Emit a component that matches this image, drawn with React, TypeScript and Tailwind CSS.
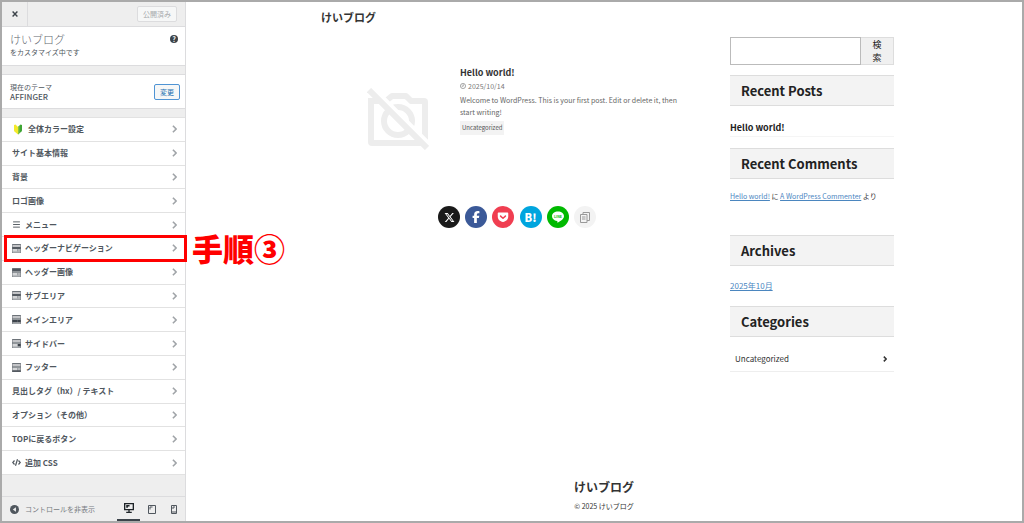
import type { ReactNode } from "react";
import { Menu } from "lucide-react";
import { FaFacebookF, FaGetPocket, FaXTwitter } from "react-icons/fa6";

type PanelArea = "nav" | "image" | "sub" | "main" | "side" | "footer";

interface PanelItem {
  label: string;
  icon?: ReactNode;
  highlighted?: boolean;
}

function BeginnerMark() {
  return (
    <svg viewBox="0 0 16 20" className="mx-[2px] h-[11px] w-[8px]">
      <path d="M0 1 L3 0 L8 5 V20 L1 14 Q0 13 0 11Z" fill="#f4ea2a" />
      <path d="M16 1 L13 0 L8 5 V20 L15 14 Q16 13 16 11Z" fill="#3fa535" />
      <path d="M13 0 L8 5 V20 L11 17 V2Z" fill="#8cc63f" />
    </svg>
  );
}

function AreaIcon({ area }: { area: PanelArea }) {
  return (
    <svg viewBox="0 0 18 18" className="h-[9px] w-[9px]">
      <rect x="0" y="0" width="18" height="18" rx="1" fill="#6c7278" />
      <rect x="1" y="2" width="16" height="4" fill={area === "image" ? "#50575e" : "#c3c4c7"} />
      <rect x="1" y="7" width="16" height="2" fill={area === "sub" || area === "nav" ? "#3c434a" : "#b4b7ba"} />
      <rect x="1" y="10" width="10" height="5" fill={area === "main" ? "#3c434a" : "#d4d5d7"} />
      <rect x="12" y="10" width="5" height="5" fill={area === "side" || area === "main" ? "#3c434a" : "#b4b7ba"} />
      <rect x="1" y="15" width="16" height="2" fill={area === "footer" ? "#3c434a" : "#d4d5d7"} />
    </svg>
  );
}

function CodeIcon() {
  return (
    <svg viewBox="0 0 18 14" className="h-[7px] w-[9px]" fill="none" stroke="#50575e" strokeWidth="2.4">
      <path d="M5 3 L1.5 7 L5 11 M13 3 L16.5 7 L13 11 M11 0.5 L7 13.5" />
    </svg>
  );
}

function Chevron() {
  return (
    <svg viewBox="0 0 6 10" className="h-2 w-[5px] shrink-0" fill="none" stroke="#a0a4a8" strokeWidth="2">
      <path d="M1 1 L5 5 L1 9" />
    </svg>
  );
}

const panels: PanelItem[] = [
  { label: "全体カラー設定", icon: <BeginnerMark /> },
  { label: "サイト基本情報" },
  { label: "背景" },
  { label: "ロゴ画像" },
  { label: "メニュー", icon: <Menu className="h-[9px] w-[9px]" strokeWidth={2.5} /> },
  { label: "ヘッダーナビゲーション", icon: <AreaIcon area="nav" />, highlighted: true },
  { label: "ヘッダー画像", icon: <AreaIcon area="image" /> },
  { label: "サブエリア", icon: <AreaIcon area="sub" /> },
  { label: "メインエリア", icon: <AreaIcon area="main" /> },
  { label: "サイドバー", icon: <AreaIcon area="side" /> },
  { label: "フッター", icon: <AreaIcon area="footer" /> },
  { label: "見出しタグ（hx）/ テキスト" },
  { label: "オプション（その他）" },
  { label: "TOPに戻るボタン" },
  { label: "追加 CSS", icon: <CodeIcon /> },
];

function PanelRow({ item }: { item: PanelItem }) {
  return (
    <li className="relative flex flex-1 border-b border-[#e2e2e2] bg-white">
      <button className="flex min-w-0 flex-1 items-center pr-2 pl-[10px] text-left text-[8px] font-bold text-[#50575e]">
        {item.icon && <span className="mr-1 flex shrink-0">{item.icon}</span>}
        <span className="flex-1 whitespace-nowrap">{item.label}</span>
        <Chevron />
      </button>
      {item.highlighted && (
        <>
          <span className="pointer-events-none absolute -inset-x-[2px] -inset-y-[2px] left-[2px] z-10 border-[3px] border-[#ff0000]" />
          <span className="pointer-events-none absolute top-1/2 left-full z-10 ml-[7px] -translate-y-1/2 text-[31px] leading-8 font-black whitespace-nowrap text-[#ff0000]">
            手順③
          </span>
        </>
      )}
    </li>
  );
}

function Customizer() {
  return (
    <aside className="flex w-[184px] shrink-0 flex-col border-r border-[#dcdcde] bg-[#eeeeee]">
      <header className="flex h-[25px] items-center justify-between border-b border-[#dcdcde] pr-2">
        <button aria-label="閉じる" className="flex h-full w-[26px] items-center justify-center border-r border-[#dcdcde]">
          <svg viewBox="0 0 10 10" className="h-[6px] w-[6px]" stroke="#3c434a" strokeWidth="2.4">
            <path d="M1 1 L9 9 M9 1 L1 9" />
          </svg>
        </button>
        <button disabled className="h-4 w-10 rounded-[2px] border border-[#dcdcde] bg-[#f6f7f7] text-[7px] leading-3 text-[#a7aaad]">
          公開済み
        </button>
      </header>

      <section className="flex h-[39px] justify-between border-b border-[#dcdcde] bg-white pt-1 pr-[7px] pl-2">
        <div>
          <h1 className="text-[11px] leading-4 font-light text-[#646970]">けいブログ</h1>
          <p className="text-[7px] leading-[10px] text-[#50575e]">をカスタマイズ中です</p>
        </div>
        <button aria-label="ヘルプ" className="mt-1 flex h-2 w-2 items-center justify-center rounded-full bg-[#3c434a] text-[7px] leading-none font-bold text-white">
          ?
        </button>
      </section>

      <section className="mt-2 flex h-[35px] items-center justify-between border-y border-[#dcdcde] bg-white pr-[5px] pl-2">
        <p className="text-[7px] leading-[10px] text-[#50575e]">
          現在のテーマ
          <strong className="block text-[8px] font-medium">AFFINGER</strong>
        </p>
        <button className="h-4 w-[26px] rounded-[2px] border border-[#4f94d4] bg-[#f6f7f7] text-[7px] leading-3 text-[#2271b1]">
          変更
        </button>
      </section>

      <ul className="mt-2 flex flex-1 flex-col border-t border-[#e2e2e2]">
        {panels.map((item) => (
          <PanelRow key={item.label} item={item} />
        ))}
      </ul>

      <footer className="mt-[21px] flex h-[25px] items-center border-t border-[#dcdcde] pl-2">
        <button className="flex flex-1 items-center gap-[6px] text-[7px] whitespace-nowrap text-[#787c82]">
          <svg viewBox="0 0 16 16" className="h-[9px] w-[9px]">
            <circle cx="8" cy="8" r="8" fill="#50575e" />
            <path d="M10.5 4 V12 L5 8Z" fill="#eeeeee" />
          </svg>
          コントロールを非表示
        </button>
        <button aria-label="デスクトップ" className="flex h-full w-[23px] items-center justify-center border-b-2 border-[#3c434a]">
          <svg viewBox="0 0 18 18" className="h-[10px] w-[10px]" fill="none" stroke="#1d2327" strokeWidth="2.4">
            <path d="M1.2 1.2 H16.8 V11.8 H1.2Z M9 12 V17 M4 16.8 H14 M4 5 H10 M4 7.5 H7" />
          </svg>
        </button>
        <button aria-label="タブレット" className="flex h-full w-[23px] items-center justify-center">
          <svg viewBox="0 0 16 18" className="h-[9px] w-2" fill="none" stroke="#50575e" strokeWidth="2">
            <path d="M1 1 H15 V17 H1Z M4 9 V4 H9" />
          </svg>
        </button>
        <button aria-label="モバイル" className="flex h-full w-[22px] items-center justify-center">
          <svg viewBox="0 0 12 18" className="h-[9px] w-[6px]" fill="none" stroke="#50575e" strokeWidth="2">
            <path d="M1 1 H11 V17 H1Z M1 14 H11 M4 8 V4 H8" />
          </svg>
        </button>
      </footer>
    </aside>
  );
}

function NoImage() {
  return (
    <svg viewBox="0 0 62 62" className="mt-[21px] h-[62px] w-[62px]" fill="none" stroke="#ededed" strokeWidth="6">
      <path
        d="M4 10 V54 Q4 55 5 55 H57 Q58 55 58 54 V14 Q58 13 57 13 H44 L39 8 H25 L19 13 H5 Q4 13 4 14"
        strokeLinejoin="round"
      />
      <circle cx="31" cy="33" r="14" />
      <path d="M3 0 L62 59" stroke="#ffffff" strokeWidth="9" />
      <path d="M2 2 L60 60" />
    </svg>
  );
}

function ShareButtons() {
  return (
    <div className="mx-auto flex w-[158px] justify-between">
      <a href="#x" aria-label="X" className="flex h-[22px] w-[22px] items-center justify-center rounded-full bg-[#1a1a1a] text-white">
        <FaXTwitter className="h-[11px] w-[11px]" />
      </a>
      <a href="#facebook" aria-label="Facebook" className="flex h-[22px] w-[22px] items-center justify-center rounded-full bg-[#3b5998] text-white">
        <FaFacebookF className="h-3 w-3" />
      </a>
      <a href="#pocket" aria-label="Pocket" className="flex h-[22px] w-[22px] items-center justify-center rounded-full bg-[#f03e51] text-white">
        <FaGetPocket className="h-3 w-3" />
      </a>
      <a href="#hatena" aria-label="はてなブックマーク" className="flex h-[22px] w-[22px] items-center justify-center rounded-full bg-[#00a5de] text-[11px] leading-none font-black text-white">
        B!
      </a>
      <a href="#line" aria-label="LINE" className="flex h-[22px] w-[22px] items-center justify-center rounded-full bg-[#00b900]">
        <svg viewBox="0 0 24 24" className="h-3 w-3">
          <path d="M12 1 C5.5 1 0 5 0 10.5 C0 15.3 4.2 19.2 10 20 C11 20.2 11 21 10.7 23.5 C13 22.7 24 17 24 10.5 C24 5 18.5 1 12 1Z" fill="#ffffff" />
          <text x="12" y="13" textAnchor="middle" fontSize="7" fontWeight="700" fill="#00b900">LINE</text>
        </svg>
      </a>
      <button aria-label="コピー" className="flex h-[22px] w-[22px] items-center justify-center rounded-full bg-[#f3f3f3]">
        <svg viewBox="0 0 20 22" className="h-[11px] w-[10px]" fill="none" stroke="#999999" strokeWidth="2">
          <path d="M6 5 V1 H19 V17 H14 M1 5 H14 V21 H1Z M4 10 H11 M4 14 H11" />
        </svg>
      </button>
    </div>
  );
}

function Post() {
  return (
    <article className="flex">
      <div className="flex w-[139px] shrink-0 justify-end pr-[31px]">
        <NoImage />
      </div>
      <div className="flex-1">
        <h2 className="text-[9px] leading-3 font-bold text-[#333333]">Hello world!</h2>
        <p className="mt-px flex items-center gap-[2px] text-[7px] leading-3 text-[#777777]">
          <svg viewBox="0 0 14 14" className="h-[6px] w-[6px]" fill="none" stroke="currentColor" strokeWidth="1.5">
            <circle cx="7" cy="7" r="6" />
            <path d="M7.5 3 V7.5 H4" />
          </svg>
          2025/10/14
        </p>
        <p className="mt-[2px] text-[7px] leading-3 text-[#666666]">
          Welcome to WordPress. This is your first post. Edit or delete it, then start writing!
        </p>
        <a href="#uncategorized" className="mt-[3px] block w-fit bg-[#f3f3f3] px-[2px] text-[6px] leading-[14px] text-[#555555]">
          Uncategorized
        </a>
      </div>
    </article>
  );
}

function WidgetTitle({ children }: { children: ReactNode }) {
  return (
    <h3 className="border-y border-[#dddddd] bg-[#f3f3f3] px-[11px] text-[13px] leading-[29px] font-bold text-[#222222]">
      {children}
    </h3>
  );
}

function Widgets() {
  return (
    <aside className="w-[164px] shrink-0">
      <form className="flex h-7">
        <input aria-label="検索" className="w-[131px] shrink-0 border border-[#bbbbbb] bg-white px-2 text-[9px]" />
        <button type="button" className="min-w-0 flex-1 border border-l-0 border-[#dddddd] bg-[#f0f0f0] px-[10px] text-[9px] leading-[13px] text-[#222222]">
          検索
        </button>
      </form>

      <section className="mt-[10px] h-[73px]">
        <WidgetTitle>Recent Posts</WidgetTitle>
        <a href="#hello-world" className="mt-[14px] block border-b border-[#f5f5f5] text-[9px] leading-4 font-bold text-[#222222]">
          Hello world!
        </a>
      </section>

      <section className="h-[87px]">
        <WidgetTitle>Recent Comments</WidgetTitle>
        <p className="mt-[9px] text-[7px] leading-4 text-[#333333]">
          <a href="#hello-world" className="text-[#4b86bf] underline">Hello world!</a> に{" "}
          <a href="#commenter" className="text-[#4b86bf] underline">A WordPress Commenter</a> より
        </p>
      </section>

      <section className="h-[71px]">
        <WidgetTitle>Archives</WidgetTitle>
        <a href="#2025-10" className="mt-3 block text-[8px] leading-4 text-[#4b86bf] underline">2025年10月</a>
      </section>

      <section>
        <WidgetTitle>Categories</WidgetTitle>
        <a href="#uncategorized" className="mt-[10px] flex items-center justify-between border-b border-[#eeeeee] pr-[7px] pl-[5px] text-[8px] leading-6 text-[#333333]">
          Uncategorized
          <svg viewBox="0 0 6 10" className="h-[6px] w-[4px]" fill="none" stroke="currentColor" strokeWidth="2.5">
            <path d="M1 1 L5 5 L1 9" />
          </svg>
        </a>
      </section>
    </aside>
  );
}

export default function App() {
  return (
    <div className="flex min-h-screen border-2 border-[#aaaaaa] bg-white font-['Noto_Sans_CJK_JP',sans-serif]">
      <Customizer />
      <div className="flex min-w-0 flex-1 flex-col">
        <div className="flex-1 pl-[7px]">
          <div className="mx-auto max-w-[573px]">
            <header className="h-[35px] pt-[7px]">
              <a href="#home" className="block text-[11px] leading-4 font-bold text-[#333333]">けいブログ</a>
            </header>
            <div className="flex justify-between">
              <main className="w-[392px] pt-[30px]">
                <div className="pr-[30px]">
                  <Post />
                </div>
                <div className="pt-[56px]">
                  <ShareButtons />
                </div>
              </main>
              <Widgets />
            </div>
          </div>
        </div>
        <footer className="pb-[7px] text-center text-[#333333]">
          <p className="text-[12px] leading-5 font-bold">けいブログ</p>
          <p className="mt-px text-[7px] leading-4">© 2025 けいブログ</p>
        </footer>
      </div>
    </div>
  );
}
